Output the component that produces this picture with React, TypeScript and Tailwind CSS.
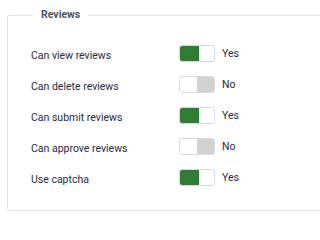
import React from "react";

const rows: { label: string; on: boolean }[] = [
  { label: "Can view reviews", on: true },
  { label: "Can delete reviews", on: false },
  { label: "Can submit reviews", on: true },
  { label: "Can approve reviews", on: false },
  { label: "Use captcha", on: true },
];

function Toggle({ on }: { on: boolean }) {
  return (
    <div className="flex h-[17px] w-[36px] overflow-hidden rounded-[3px] border border-[#d6d9de] bg-white">
      {on ? (
        <div className="h-full w-[19px] bg-[#2f7d32]" />
      ) : (
        <>
          <div className="h-full w-[17px] bg-white" />
          <div className="h-full flex-1 bg-[#d2d2d2]" />
        </>
      )}
    </div>
  );
}

export default function App() {
  return (
    <div
      className="h-[225px] w-full overflow-hidden bg-white"
      style={{ fontFamily: "Roboto, 'Noto Sans', sans-serif" }}
    >
      <fieldset className="ml-[7px] mt-[8px] h-[203px] w-[600px] rounded-[2px] border border-[#e3e5ea] pl-[25px]">
        <legend className="px-[8px] text-[10.5px] font-bold leading-[14px] text-[#50555c]">
          Reviews
        </legend>
        <div className="mt-[23px] flex flex-col gap-[14px]">
          {rows.map((r) => (
            <div key={r.label} className="flex h-[17px] items-center">
              <div className="-ml-[2px] mt-[4px] w-[148px] text-[10.5px] text-[#1f2b47]">
                {r.label}
              </div>
              <Toggle on={r.on} />
              <span className="ml-[7px] text-[10.5px] text-[#1f2b47]">
                {r.on ? "Yes" : "No"}
              </span>
            </div>
          ))}
        </div>
      </fieldset>
    </div>
  );
}
